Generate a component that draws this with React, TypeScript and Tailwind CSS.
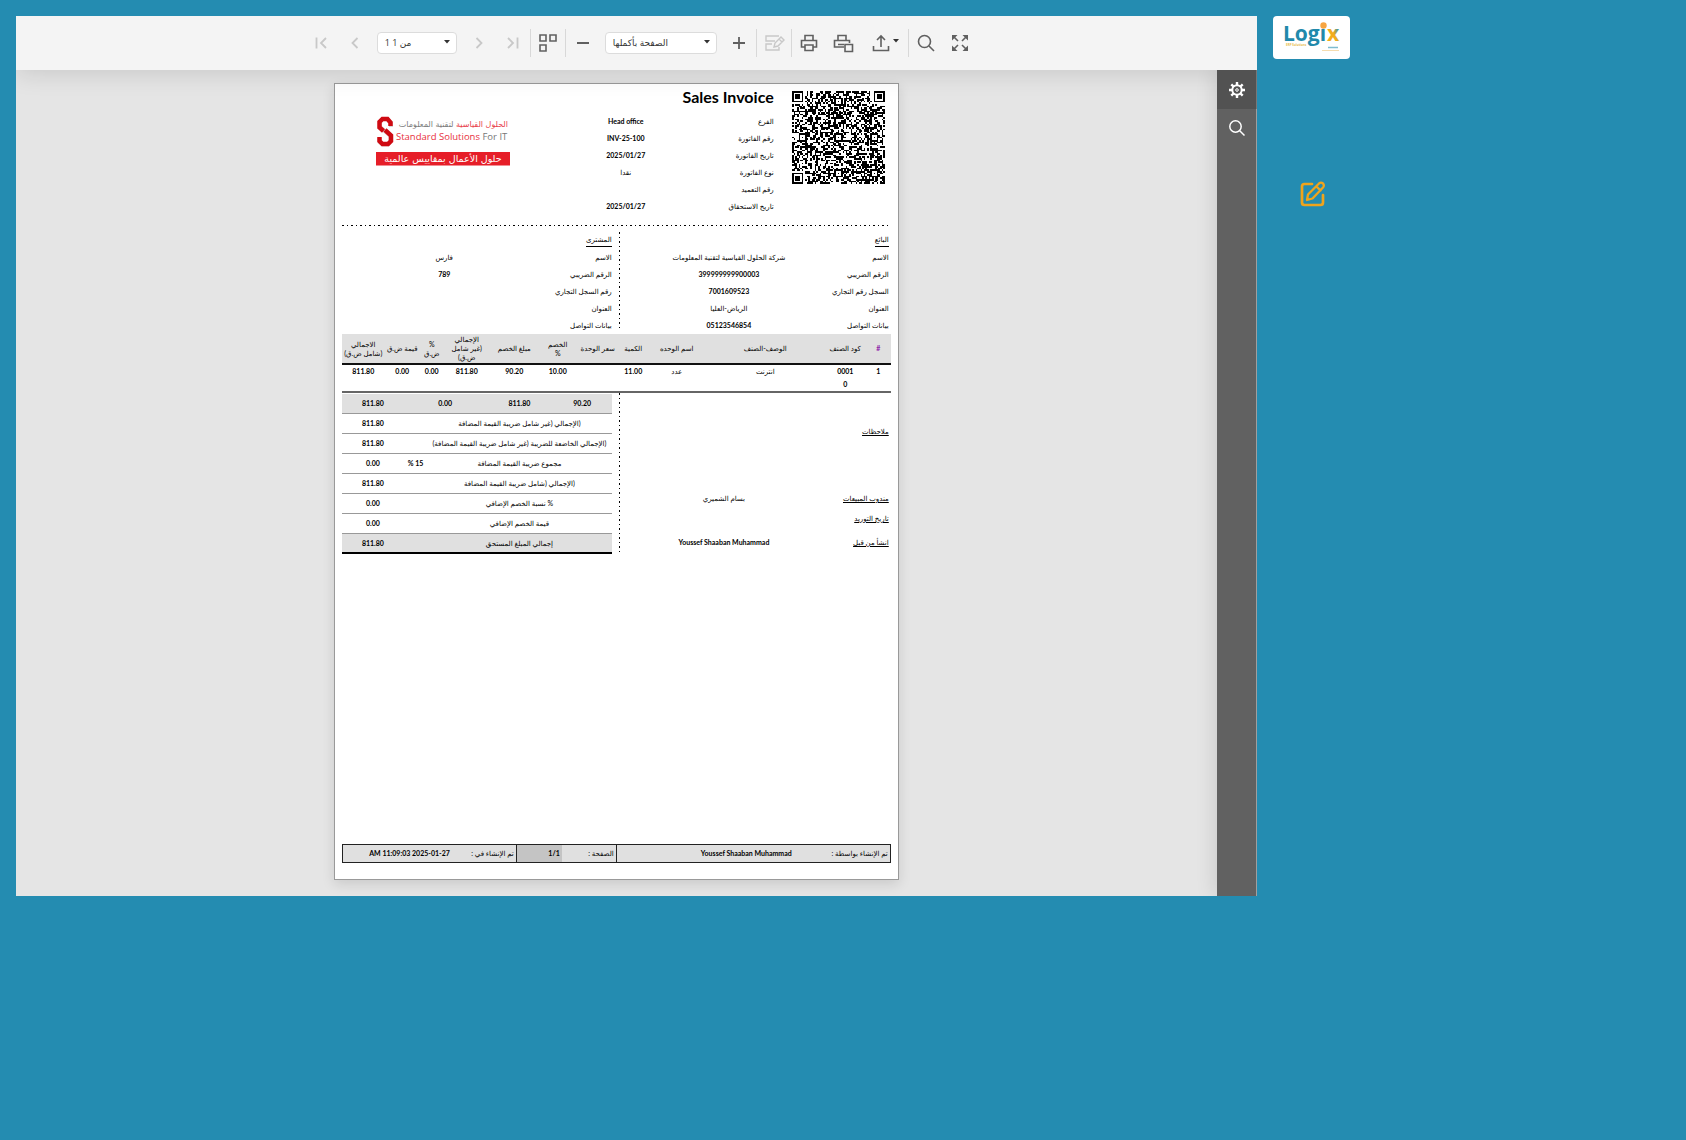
import type { ReactNode } from "react";

const meta = [
  { label: "الفرع", value: "Head office" },
  { label: "رقم الفاتورة", value: "INV-25-100" },
  { label: "تاريخ الفاتورة", value: "2025/01/27" },
  { label: "نوع الفاتورة", value: "نقدا" },
  { label: "رقم التعميد", value: "" },
  { label: "تاريخ الاستحقاق", value: "2025/01/27" },
];

const seller = [
  { label: "الاسم", value: "شركة الحلول القياسية لتقنية المعلومات" },
  { label: "الرقم الضريبي", value: "399999999900003" },
  { label: "السجل رقم التجاري", value: "7001609523" },
  { label: "العنوان", value: "الرياض-العليا" },
  { label: "بيانات التواصل", value: "05123546854" },
];

const buyer = [
  { label: "الاسم", value: "فارس" },
  { label: "الرقم الضريبي", value: "789" },
  { label: "رقم السجل التجاري", value: "" },
  { label: "العنوان", value: "" },
  { label: "بيانات التواصل", value: "" },
];

const columns = [
  { title: "#", value: "1", width: 25 },
  { title: "كود الصنف", value: "0001\n0", width: 41 },
  { title: "الوصف-الصنف", value: "انترنت", width: 119 },
  { title: "اسم الوحده", value: "عدد", width: 58 },
  { title: "الكمية", value: "11.00", width: 29 },
  { title: "سعر الوحدة", value: "", width: 42 },
  { title: "الخصم\n%", value: "10.00", width: 38 },
  { title: "مبلغ الخصم", value: "90.20", width: 49 },
  { title: "الإجمالي\n(غير شامل\nض.ق)", value: "811.80", width: 46 },
  { title: "%\nض.ق", value: "0.00", width: 24 },
  { title: "قيمة ض.ق", value: "0.00", width: 35 },
  { title: "الاجمالي\n(شامل ض.ق)", value: "811.80", width: 43 },
];

const totals = [
  { label: "(الإجمالي (غير شامل ضريبة القيمة المضافة", rate: "", value: "811.80" },
  { label: "(الإجمالي الخاضعة للضريبة (غير شامل ضريبة القيمة المضافة)", rate: "", value: "811.80" },
  { label: "مجموع ضريبة القيمة المضافة", rate: "% 15", value: "0.00" },
  { label: "(الإجمالي (شامل ضريبة القيمة المضافة", rate: "", value: "811.80" },
  { label: "% نسبة الخصم الإضافي", rate: "", value: "0.00" },
  { label: "قيمة الخصم الإضافي", rate: "", value: "0.00" },
];

// Latin text and digits are bold on the invoice, Arabic is regular
const weight = (text: string) =>
  /[\u0600-\u06FF]/.test(text) ? "font-normal" : "font-bold";

// 57x57 modules with finder and alignment squares
function qrPath() {
  const n = 57;
  let seed = 20250127;
  const rand = () => {
    seed = (seed * 1103515245 + 12345) % 2147483648;
    return seed / 2147483648;
  };
  const ring = (x: number, y: number, cx: number, cy: number) =>
    Math.max(Math.abs(x - cx), Math.abs(y - cy));
  const finders = [[3, 3], [n - 4, 3], [3, n - 4]];
  const aligns = [[28, 6], [6, 28], [28, 28], [50, 28], [28, 50], [50, 50]];
  let d = "";
  for (let y = 0; y < n; y++) {
    for (let x = 0; x < n; x++) {
      let on = rand() > 0.5;
      if (x === 6 || y === 6) on = (x + y) % 2 === 0;
      aligns.forEach(([cx, cy]) => {
        const r = ring(x, y, cx, cy);
        if (r <= 2) on = r !== 1;
      });
      finders.forEach(([cx, cy]) => {
        const r = ring(x, y, cx, cy);
        if (r <= 4) on = r !== 4 && r !== 2;
      });
      if (on) d += `M${x} ${y}h1v1h-1z`;
    }
  }
  return d;
}

const qr = qrPath();

function ToolButton({
  label,
  disabled,
  wide,
  children,
}: {
  label: string;
  disabled?: boolean;
  wide?: boolean;
  children: ReactNode;
}) {
  return (
    <button
      type="button"
      aria-label={label}
      disabled={disabled}
      className={`flex h-7 items-center justify-center ${wide ? "w-12" : "w-[34px]"} ${
        disabled ? "text-[#c8c8c8]" : "text-[#606060]"
      }`}
    >
      {children}
    </button>
  );
}

function Icon({ children }: { children: ReactNode }) {
  return (
    <svg
      viewBox="0 0 24 24"
      className="size-6 shrink-0"
      fill="none"
      stroke="currentColor"
      strokeWidth="1.6"
    >
      {children}
    </svg>
  );
}

function Caret() {
  return (
    <svg viewBox="0 0 6 4" className="h-1 w-1.5 shrink-0" fill="#333">
      <path d="M0 0h6L3 3.5z" />
    </svg>
  );
}

function Separator() {
  return <div className="h-7 w-px bg-[#d8d8d8]" />;
}

function Dropdown({ label, value, wide }: { label: string; value: string; wide?: boolean }) {
  return (
    <div className={`relative mx-[5px] ${wide ? "w-28" : "w-20"}`}>
      <select
        aria-label={label}
        className="block h-[22px] w-full appearance-none rounded-sm border border-[#dcdcdc] bg-white px-[7px] font-['Open_Sans','DejaVu_Sans',sans-serif] text-[9px] leading-5 text-[#333]"
      >
        <option>{value}</option>
      </select>
      <div className="pointer-events-none absolute top-2 right-[7px]">
        <Caret />
      </div>
    </div>
  );
}

function Toolbar() {
  return (
    <header className="relative z-10 flex h-[54px] items-center justify-center bg-[#f4f4f4] pl-2 shadow-[0_4px_24px_rgba(0,0,0,0.12)]">
      <ToolButton label="First page" disabled>
        <Icon>
          <path d="M7.5 6.500v11M17 7l-5 5 5 5" strokeWidth="1.800" />
        </Icon>
      </ToolButton>
      <ToolButton label="Previous page" disabled>
        <Icon>
          <path d="M14.500 7l-5 5 5 5" strokeWidth="1.800" />
        </Icon>
      </ToolButton>
      <Dropdown label="Page" value="1 1 من" />
      <ToolButton label="Next page" disabled>
        <Icon>
          <path d="M9.500 7l5 5-5 5" strokeWidth="1.800" />
        </Icon>
      </ToolButton>
      <ToolButton label="Last page" disabled>
        <Icon>
          <path d="M7 7l5 5-5 5M16.500 6.500v11" strokeWidth="1.800" />
        </Icon>
      </ToolButton>
      <Separator />
      <ToolButton label="Multipage mode">
        <Icon>
          <path d="M4 4h6v6H4zM14 4h6v6h-6zM4 14h6v6H4z" />
        </Icon>
      </ToolButton>
      <Separator />
      <ToolButton label="Zoom out">
        <Icon>
          <path d="M6 12h12" strokeWidth="2" />
        </Icon>
      </ToolButton>
      <Dropdown label="Zoom" value="الصفحة بأكملها" wide />
      <ToolButton label="Zoom in">
        <Icon>
          <path d="M6 12h12M12 6v12" strokeWidth="1.800" />
        </Icon>
      </ToolButton>
      <Separator />
      <ToolButton label="Highlight editing fields" disabled>
        <Icon>
          <path
            d="M17 5H4v5h9M10 13H4v6h13v-3M12 16l1-4 6-6 3 3-6 6zM17 8l3 3"
            strokeWidth="1.400"
          />
        </Icon>
      </ToolButton>
      <Separator />
      <ToolButton label="Print">
        <Icon>
          <path d="M8 9V4.500h8V9M8 16H4.500V9.500h15V16H16M8 14h8v5.500H8z" />
        </Icon>
      </ToolButton>
      <ToolButton label="Print page">
        <Icon>
          <path d="M7 9V4.500h8V9M13 16H3.500V9.500h15V12M7 13.500h6M14 13.500h7.500v7H14z" />
        </Icon>
      </ToolButton>
      <ToolButton label="Export to" wide>
        <Icon>
          <path d="M4.500 15v4.500h15V15M12 16V5M8 9l4-4 4 4" />
        </Icon>
        <span className="pb-1">
          <Caret />
        </span>
      </ToolButton>
      <Separator />
      <ToolButton label="Search">
        <Icon>
          <circle cx="10.500" cy="10.500" r="6" />
          <path d="M15 15l5 5" />
        </Icon>
      </ToolButton>
      <ToolButton label="Full screen">
        <Icon>
          <path
            d="M4 4h5.500L4 9.500zM20 4v5.500L14.500 4zM4 20v-5.500L9.500 20zM20 20h-5.500l5.500-5.500z"
            fill="currentColor"
            stroke="none"
          />
          <path d="M6 6l4 4M18 6l-4 4M6 18l4-4M18 18l-4-4" />
        </Icon>
      </ToolButton>
    </header>
  );
}

function CompanyLogo() {
  return (
    <svg
      viewBox="0 0 134 50"
      className="mt-[25px] mr-auto ml-[34px] h-[50px] w-[134px]"
      role="img"
      aria-label="Standard Solutions For IT"
    >
      <path d="M15 11V6.500L11.500 3h-5L4 6v5l10.500 9v5L12 28.500H6.500L3.500 26v-4" fill="none" stroke="#d9d9d9" strokeWidth="4" />
      <path d="M14.500 10V6.500L11.500 3H6.500L3.500 6v5.500l4 3.500M9 14l6 5.500V25l-3 3H6.500L3.500 25v-4" fill="none" stroke="#cf0a12" strokeWidth="4.500" />
      <text x="132" y="11" fontSize="8" fontWeight="400" direction="rtl" textAnchor="start" fontFamily="'DejaVu Sans', sans-serif">
        <tspan fill="#e8404a">الحلول القياسية </tspan>
        <tspan fill="#7b7b7b">لتقنية المعلومات</tspan>
      </text>
      <text x="20" y="24" fontSize="9.500" fontWeight="400" direction="ltr" textAnchor="start" fontFamily="'Open Sans', sans-serif">
        <tspan fill="#e8303c">Standard Solutions </tspan>
        <tspan fill="#777">For IT</tspan>
      </text>
      <rect y="36" width="134" height="13.500" fill="#e61e28" />
      <text x="67" y="46" fontSize="9.500" fontWeight="400" fill="#fff" direction="rtl" textAnchor="middle" fontFamily="'DejaVu Sans', sans-serif">
        حلول الأعمال بمقاييس عالمية
      </text>
    </svg>
  );
}

function Party({
  title,
  rows,
  className,
}: {
  title: string;
  rows: { label: string; value: string }[];
  className: string;
}) {
  return (
    <section className={`leading-4 ${className}`}>
      <h2 className="mb-0.5 w-fit border-b border-black leading-[14px] font-normal">{title}</h2>
      <dl>
        {rows.map((row) => (
          <div key={row.label} className="flex h-[17px]">
            <dt className="w-[30%] font-normal whitespace-nowrap">{row.label}</dt>
            <dd className={`flex-1 text-center whitespace-nowrap ${weight(row.value)}`}>
              {row.value}
            </dd>
          </div>
        ))}
      </dl>
    </section>
  );
}

function Invoice() {
  return (
    <article
      dir="rtl"
      className="flex aspect-[565/797] w-[565px] flex-col border border-[#999] bg-white px-[7px] pt-[7px] pb-4 font-[Lato,'DejaVu_Sans',sans-serif] text-[7px] font-bold text-black shadow-[0_4px_12px_rgba(0,0,0,0.12)]"
    >
      <div className="flex">
        <svg viewBox="0 0 57 57" className="mr-[6px] ml-[18px] size-[93px]" role="img" aria-label="QR" shapeRendering="crispEdges">
          <path d={qr} />
        </svg>
        <div className="w-[184px]">
          <h1 className="mb-2.5 text-base leading-3">Sales Invoice</h1>
          <dl className="leading-[17px]">
            {meta.map((row) => (
              <div key={row.label} className="flex h-[17px]">
                <dt className="w-28 font-normal">{row.label}</dt>
                <dd className={`flex-1 text-center ${weight(row.value)}`}>{row.value}</dd>
              </div>
            ))}
          </dl>
        </div>
        <CompanyLogo />
      </div>

      <div className="mt-2.5 h-px bg-[repeating-linear-gradient(90deg,#000_0_2px,transparent_2px_5px,#000_5px_6px,transparent_6px_9px)]" />

      <div className="mt-[6px] flex">
        <Party title="البائع" rows={seller} className="w-[271px] pr-0.5 [&_dd]:pl-[30px]" />
        <div className="mb-[3px] w-px bg-[repeating-linear-gradient(180deg,#000_0_2px,transparent_2px_5px,#000_5px_6px,transparent_6px_9px)]" />
        <Party title="المشترى" rows={buyer} className="flex-1 pr-[7px] [&_dd]:pl-4" />
      </div>

      <table className="w-full table-fixed border-separate border-spacing-0 text-center">
        <colgroup>
          {columns.map((col) => (
            <col key={col.title} style={{ width: col.width }} />
          ))}
        </colgroup>
        <thead>
          <tr className="h-[31px] bg-[#e0e0e0] leading-[9px]">
            {columns.map((col) => (
              <th
                key={col.title}
                className={`border-b-2 border-[#111] p-0 align-middle whitespace-pre first:text-[#8e24aa] ${weight(col.title)}`}
              >
                {col.title}
              </th>
            ))}
          </tr>
        </thead>
        <tbody>
          <tr className="h-[27px] align-top leading-[13px]">
            {columns.map((col) => (
              <td
                key={col.title}
                className={`border-b-2 border-[#666] p-0 whitespace-pre ${weight(col.value)}`}
              >
                {col.value}
              </td>
            ))}
          </tr>
        </tbody>
      </table>

      <div className="flex">
        <dl className="w-[271px] shrink-0 pt-7 pr-0.5 leading-5 [&_dt]:font-normal">
          <dt className="w-fit underline">ملاحظات</dt>
          <dd className="h-[47px]" />
          <div className="flex">
            <dt className="w-[30%] underline">مندوب المبيعات</dt>
            <dd className="flex-1 pl-5 text-center font-normal">بسام الشميري</dd>
          </div>
          <dt className="w-fit underline">تاريخ التوريد</dt>
          <div className="mt-1 flex">
            <dt className="w-[30%] underline">انشأ من قبل</dt>
            <dd className="flex-1 pl-5 text-center">Youssef Shaaban Muhammad</dd>
          </div>
        </dl>
        <div className="ml-[7px] w-px shrink-0 bg-[repeating-linear-gradient(180deg,#000_0_2px,transparent_2px_5px,#000_5px_6px,transparent_6px_9px)]" />
        <div className="min-w-0 flex-1 pt-px">
          <table className="w-full table-fixed border-separate border-spacing-0 text-center">
            <colgroup>
              <col className="w-[59px]" />
              <col className="w-[66px]" />
              <col className="w-[59px]" />
              <col className="w-[23px]" />
              <col className="w-[62px]" />
            </colgroup>
            <tbody className="[&_td]:border-b [&_td]:border-[#999] [&_td]:p-0 [&_th]:border-b [&_th]:border-[#999] [&_th]:p-0 [&_th]:font-normal">
              <tr className="h-5 bg-[#e0e0e0]">
                <td>90.20</td>
                <td>811.80</td>
                <td colSpan={2}>0.00</td>
                <td>811.80</td>
              </tr>
              {totals.map((row) => (
                <tr key={row.label} className="h-5">
                  <th colSpan={3} className="whitespace-nowrap">{row.label}</th>
                  <td dir="ltr" className="whitespace-nowrap">{row.rate}</td>
                  <td>{row.value}</td>
                </tr>
              ))}
              <tr className="h-5 bg-[#e0e0e0] [&>*]:border-b-2! [&>*]:border-black!">
                <th colSpan={3}>إجمالي المبلغ المستحق</th>
                <td />
                <td>811.80</td>
              </tr>
            </tbody>
          </table>
        </div>
      </div>

      <footer className="mt-auto flex h-[19px] border border-[#222] bg-[#e0e0e0] leading-[17px] whitespace-nowrap">
        <div className="flex flex-1 border-l border-[#222] pr-0.5">
          <span className="w-24 font-normal">تم الإنشاء بواسطة :</span>
          <span>Youssef Shaaban Muhammad</span>
        </div>
        <div className="flex w-[100px] shrink-0 justify-between border-l border-[#222] pr-0.5">
          <span className="font-normal">الصفحة :</span>
          <span className="w-[45px] bg-[#c4c4c4] pr-0.5">1/1</span>
        </div>
        <div className="flex w-[173px] shrink-0 pr-0.5">
          <span className="w-16 font-normal">تم الإنشاء في :</span>
          <span dir="ltr">AM 11:09:03 2025-01-27</span>
        </div>
      </footer>
    </article>
  );
}

function GearIcon() {
  return (
    <svg viewBox="0 0 16 16" className="size-4" fill="none" stroke="#fff">
      <circle cx="8" cy="8" r="4.700" strokeWidth="2" />
      <circle cx="8" cy="8" r="1.300" strokeWidth="1" />
      <path
        d="M8 0v3M8 13v3M0 8h3M13 8h3M2.300 2.300l2.200 2.200M11.500 11.500l2.200 2.200M2.300 13.700l2.200-2.200M11.500 4.500l2.200-2.200"
        strokeWidth="2.400"
      />
    </svg>
  );
}

function SidePanel() {
  return (
    <aside className="relative z-20 flex w-10 shrink-0 flex-col bg-[#616161] shadow-[-2px_0_20px_rgba(0,0,0,0.12)] [clip-path:inset(0_0_0_-40px)]">
      <button type="button" aria-label="Export options" className="flex h-[39px] items-center justify-center bg-[#525252]">
        <GearIcon />
      </button>
      <button type="button" aria-label="Search panel" className="flex h-[38px] items-center justify-center">
        <svg viewBox="0 0 16 16" className="size-4" fill="none" stroke="#fff" strokeWidth="1.500">
          <circle cx="6.500" cy="6.500" r="5.700" />
          <path d="M10.500 10.500l5 5" />
        </svg>
      </button>
    </aside>
  );
}

function LogixLogo() {
  return (
    <a href="#" aria-label="Logix" className="flex h-[43px] w-[77px] items-center justify-center rounded-sm bg-white">
      <svg viewBox="0 0 57 31" className="h-[31px] w-[57px] overflow-visible">
        <defs>
          <linearGradient id="amber" x1="0" y1="1" x2="1" y2="0">
            <stop offset="0.500" stopColor="#f2ac1c" />
            <stop offset="0.800" stopColor="#1f8fb4" />
          </linearGradient>
        </defs>
        <text x="0" y="19" fontSize="21" fontWeight="700" fontFamily="'Open Sans', sans-serif" fill="#2189ab">
          Logi
        </text>
        <text x="44" y="19" fontSize="21" fontWeight="700" fontFamily="'Open Sans', sans-serif" fill="url(#amber)">
          x
        </text>
        <circle cx="40.500" cy="3.500" r="3.200" fill="#f7a541" />
        <text x="3" y="24" fontSize="3" fontWeight="700" fontFamily="'Open Sans', sans-serif" fill="#e9bd4c">
          ERP Solutions
        </text>
        <path d="M45 25.500h10" stroke="#7fbcd0" strokeWidth="1.500" />
        <path d="M39 28.500h17" stroke="#f6dcae" />
      </svg>
    </a>
  );
}

export default function App() {
  return (
    <div className="flex min-h-screen items-start gap-4 bg-[#248cb1] p-4">
      <main className="w-3/4 shrink-0 overflow-hidden bg-[#e5e5e5]">
        <Toolbar />
        <div className="flex">
          <div className="flex flex-1 justify-center pt-[13px] pb-4">
            <Invoice />
          </div>
          <SidePanel />
        </div>
      </main>
      <div className="flex flex-col items-center">
        <LogixLogo />
        <button type="button" aria-label="Edit" className="mt-[122px] pl-1 text-[#f0a41c]">
          <svg viewBox="0 0 26 26" className="size-[26px]" fill="none" stroke="currentColor" strokeWidth="2.700" strokeLinejoin="round" strokeLinecap="round">
            <path d="M12 3H4.500Q2 3 2 5.500v16Q2 24 4.500 24h16q2.500 0 2.500-2.500V14" />
            <path d="M7 19l1-5.500L19 2.500q2-1.700 4 0 1.700 2 0 4L12.500 17.500zM16.500 5.500l4 4" strokeWidth="2.300" />
          </svg>
        </button>
      </div>
    </div>
  );
}
